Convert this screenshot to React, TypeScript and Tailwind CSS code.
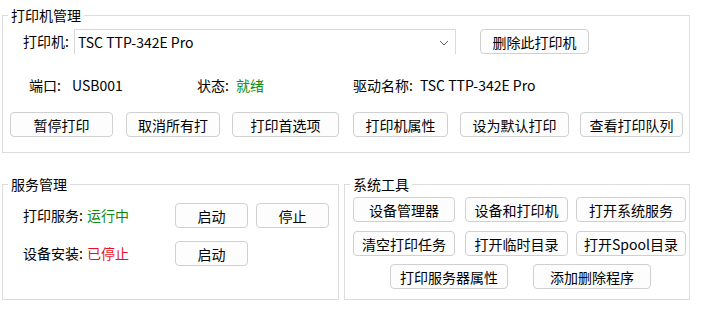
const font = { fontFamily: '"Noto Sans CJK SC", "Liberation Sans", sans-serif' };

const Btn = ({ children, className = "" }: { children: React.ReactNode; className?: string }) => (
  <button
    className={
      "h-[25px] shrink-0 rounded-[4px] border border-[#d0d0d0] bg-[#fdfdfd] text-[14px] leading-none text-black " +
      className
    }
  >
    {children}
  </button>
);

const Legend = ({ children }: { children: React.ReactNode }) => (
  <legend className="ml-[5px] h-[20px] px-[3px] text-[14px] leading-[20px] text-black">{children}</legend>
);

export default function App() {
  return (
    <div className="h-[322px] w-[702px] bg-white pt-[5px] text-[14px] text-black" style={font}>
      {/* 打印机管理 */}
      <fieldset className="ml-[2px] w-[688px] border border-[#dcdcdc] pt-[4px] pb-[15px]">
        <Legend>打印机管理</Legend>
        <div className="flex h-[25px] items-center pl-[20px]">
          <span className="w-[51px]">打印机:</span>
          <div className="flex h-[25px] w-[382px] items-center justify-between border border-b-0 border-[#d9d9d9] bg-white pl-[3px] pr-[6px]">
            <span>TSC TTP-342E Pro</span>
            <svg width="10" height="6" viewBox="0 0 10 6" className="mt-[1px]">
              <path d="M1 1 L5 5 L9 1" fill="none" stroke="#606060" strokeWidth="1" />
            </svg>
          </div>
          <Btn className="ml-[24px] w-[109px]">删除此打印机</Btn>
        </div>
        <div className="mt-[21px] flex h-[20px] items-center pl-[26px]">
          <div className="flex w-[168px]">
            <span className="w-[43px]">端口:</span>
            <span>USB001</span>
          </div>
          <div className="flex w-[156px]">
            <span className="w-[39px]">状态:</span>
            <span className="text-[#108a10]">就绪</span>
          </div>
          <div className="flex">
            <span className="w-[67px]">驱动名称:</span>
            <span>TSC TTP-342E Pro</span>
          </div>
        </div>
        <div className="mt-[17px] flex pl-[7px]">
          <Btn className="w-[103px]">暂停打印</Btn>
          <Btn className="ml-[13px] w-[94px]">取消所有打</Btn>
          <Btn className="ml-[12px] w-[107px]">打印首选项</Btn>
          <Btn className="ml-[14px] w-[95px]">打印机属性</Btn>
          <Btn className="ml-[12px] w-[109px]">设为默认打印</Btn>
          <Btn className="ml-[11px] w-[103px]">查看打印队列</Btn>
        </div>
      </fieldset>

      <div className="mt-[21px] flex">
        {/* 服务管理 */}
        <fieldset className="ml-[2px] w-[337px] border border-[#dcdcdc] pt-[9px] pb-[33px]">
          <Legend>服务管理</Legend>
          <div className="flex h-[25px] items-center pl-[20px]">
            <div className="flex w-[152px]">
              <span className="w-[64px]">打印服务:</span>
              <span className="text-[#108a10]">运行中</span>
            </div>
            <Btn className="w-[73px]">启动</Btn>
            <Btn className="ml-[8px] w-[73px]">停止</Btn>
          </div>
          <div className="mt-[13px] flex h-[25px] items-center pl-[20px]">
            <div className="flex w-[152px]">
              <span className="w-[64px]">设备安装:</span>
              <span className="text-[#e81123]">已停止</span>
            </div>
            <Btn className="w-[73px]">启动</Btn>
          </div>
        </fieldset>

        {/* 系统工具 */}
        <fieldset className="ml-[5px] w-[346px] border border-[#dcdcdc] pt-[3px] pb-[10px]">
          <Legend>系统工具</Legend>
          <div className="flex pl-[8px]">
            <Btn className="w-[102px]">设备管理器</Btn>
            <Btn className="ml-[10px] w-[103px]">设备和打印机</Btn>
            <Btn className="ml-[8px] w-[110px]">打开系统服务</Btn>
          </div>
          <div className="mt-[9px] flex pl-[8px]">
            <Btn className="w-[102px]">清空打印任务</Btn>
            <Btn className="ml-[10px] w-[103px]">打开临时目录</Btn>
            <Btn className="ml-[8px] w-[110px]">打开Spool目录</Btn>
          </div>
          <div className="mt-[8px] flex pl-[45px]">
            <Btn className="w-[118px]">打印服务器属性</Btn>
            <Btn className="ml-[25px] w-[118px]">添加删除程序</Btn>
          </div>
        </fieldset>
      </div>
    </div>
  );
}
